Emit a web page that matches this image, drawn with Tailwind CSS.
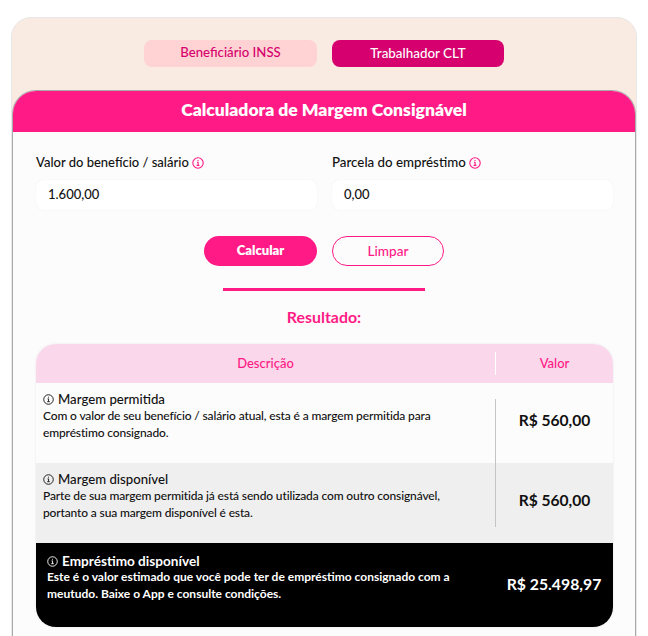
<!doctype html>
<html lang="pt-BR">
<head>
<meta charset="utf-8">
<script src="https://cdn.jsdelivr.net/npm/@tailwindcss/browser@4"></script>
</head>
<body class="bg-white font-['Lato',sans-serif] text-[#111]">
<div class="h-[636px] w-[648px] overflow-hidden">
  <p class="mt-[-17px] flex h-[34px] gap-[100px] pl-[21px] text-[14px] leading-[18px] text-[#111]"><span>p</span><span>p</span></p>
  <div class="ml-[11px] w-[626px] rounded-[20px] border border-[#e8e8e8] bg-[#f9ebe2] pt-[22px]">
    <div class="flex justify-center gap-[15px]">
      <button class="h-[27px] w-[173px] rounded-[8px] bg-[#ffd3d3] pb-[1px] text-[13.2px] font-medium text-[#d6006e]">Beneficiário INSS</button>
      <button class="h-[27px] w-[172px] rounded-[8px] bg-[#d6006e] pb-[1px] text-[13.4px] font-medium text-white">Trabalhador CLT</button>
    </div>
    <div class="mt-[23px] h-[600px] overflow-hidden rounded-t-[24px] border-x border-t border-[#a9a9a9] bg-[#fcfcfc]">
      <h1 class="flex h-[41px] items-center justify-center bg-[#ff1a85] pb-[2px] text-[17.5px] font-extrabold text-white">Calculadora de Margem Consignável</h1>
      <div class="px-[23px] pt-[21px]">
        <div class="grid grid-cols-[281px_281px] gap-[15px]">
          <div>
            <label class="flex h-[20px] items-center gap-[3px] text-[13px] font-medium text-[#111]">Valor do benefício / salário
              <svg class="size-[12px] text-[#ff1a85]" viewBox="0 0 12 12" fill="none" stroke="currentColor" stroke-width="1.1"><circle cx="6" cy="6" r="5.2"/><path d="M5 5.3h1.1v3M4.6 8.4h2.8M6 3v1"/></svg>
            </label>
            <div class="mt-[7px] flex h-[30px] items-center rounded-[8px] bg-white px-[12px] text-[13px] font-medium shadow-[0_0_2px_rgba(0,0,0,0.06)]">1.600,00</div>
          </div>
          <div>
            <label class="flex h-[20px] items-center gap-[3px] text-[13.3px] font-medium text-[#111]">Parcela do empréstimo
              <svg class="size-[12px] text-[#ff1a85]" viewBox="0 0 12 12" fill="none" stroke="currentColor" stroke-width="1.1"><circle cx="6" cy="6" r="5.2"/><path d="M5 5.3h1.1v3M4.6 8.4h2.8M6 3v1"/></svg>
            </label>
            <div class="mt-[7px] flex h-[30px] items-center rounded-[8px] bg-white px-[12px] text-[13px] font-medium shadow-[0_0_2px_rgba(0,0,0,0.06)]">0,00</div>
          </div>
        </div>
        <div class="mt-[26px] flex justify-center gap-[15px]">
          <button class="h-[30px] w-[113px] rounded-full bg-[#ff1a85] text-[13px] font-extrabold text-white">Calcular</button>
          <button class="h-[30px] w-[112px] rounded-full border border-[#ff1a85] text-[13.6px] font-medium text-[#ff1a85]">Limpar</button>
        </div>
        <div class="mx-auto mt-[22px] h-[3px] w-[202px] bg-[#ff1a85]"></div>
        <h2 class="mt-[16px] h-[20px] text-center text-[15.9px] leading-[20px] font-bold text-[#ff1a85]">Resultado:</h2>
        <div class="mt-[17px] w-[577px] overflow-hidden rounded-[20px] shadow-[0_0_3px_rgba(0,0,0,0.08)]">
          <div class="flex h-[39px] items-center bg-[#fad7eb] text-[13px] font-medium text-[#ff1a85]">
            <div class="w-[459px] text-center">Descrição</div>
            <div class="h-[23px] w-px bg-white"></div>
            <div class="flex-1 text-center">Valor</div>
          </div>
          <div class="flex h-[80px] bg-[#fcfcfc]">
            <div class="w-[459px] pl-[7px] pt-[8px]">
              <div class="flex h-[16px] items-center gap-[4px] text-[13.2px] leading-[16px] font-medium">
                <svg class="size-[11px]" viewBox="0 0 12 12" fill="none" stroke="#111"><circle cx="6" cy="6" r="5.2"/><path d="M5 5.3h1.1v3M4.6 8.4h2.8M6 3v1"/></svg>
                Margem permitida</div>
              <p class="w-[405px] text-[12px] leading-[17px] font-medium tracking-[-0.14px]">Com o valor de seu benefício / salário atual, esta é a margem permitida para empréstimo consignado.</p>
            </div>
            <div class="mt-[16px] h-[64px] w-px bg-[#c4c4c4]"></div>
            <div class="flex flex-1 items-center justify-center pb-[4px] text-[15.6px] font-bold">R$ 560,00</div>
          </div>
          <div class="flex h-[80px] bg-[#efefef]">
            <div class="w-[459px] pl-[7px] pt-[8px]">
              <div class="flex h-[16px] items-center gap-[4px] text-[13.2px] leading-[16px] font-medium">
                <svg class="size-[11px]" viewBox="0 0 12 12" fill="none" stroke="#111"><circle cx="6" cy="6" r="5.2"/><path d="M5 5.3h1.1v3M4.6 8.4h2.8M6 3v1"/></svg>
                Margem disponível</div>
              <p class="w-[405px] text-[12px] leading-[17px] font-medium tracking-[-0.14px]">Parte de sua margem permitida já está sendo utilizada com outro consignável, portanto a sua margem disponível é esta.</p>
            </div>
            <div class="h-[64px] w-px bg-[#c4c4c4]"></div>
            <div class="flex flex-1 items-center justify-center pb-[4px] text-[15.6px] font-bold">R$ 560,00</div>
          </div>
          <div class="flex h-[84px] bg-black text-white">
            <div class="w-[459px] pl-[11px] pt-[10px]">
              <div class="flex h-[16px] items-center gap-[4px] text-[13.6px] leading-[16px] font-bold">
                <svg class="size-[11px]" viewBox="0 0 12 12" fill="none" stroke="#fff"><circle cx="6" cy="6" r="5.2"/><path d="M5 5.3h1.1v3M4.6 8.4h2.8M6 3v1"/></svg>
                Empréstimo disponível</div>
              <p class="-mt-[1px] w-[415px] text-[12px] leading-[17px] font-bold">Este é o valor estimado que você pode ter de empréstimo consignado com a meutudo. Baixe o App e consulte condições.</p>
            </div>
            <div class="flex flex-1 items-center justify-center pb-[2px] text-[15.8px] font-bold">R$ 25.498,97</div>
          </div>
        </div>
      </div>
    </div>
  </div>
</div>
</body>
</html>
